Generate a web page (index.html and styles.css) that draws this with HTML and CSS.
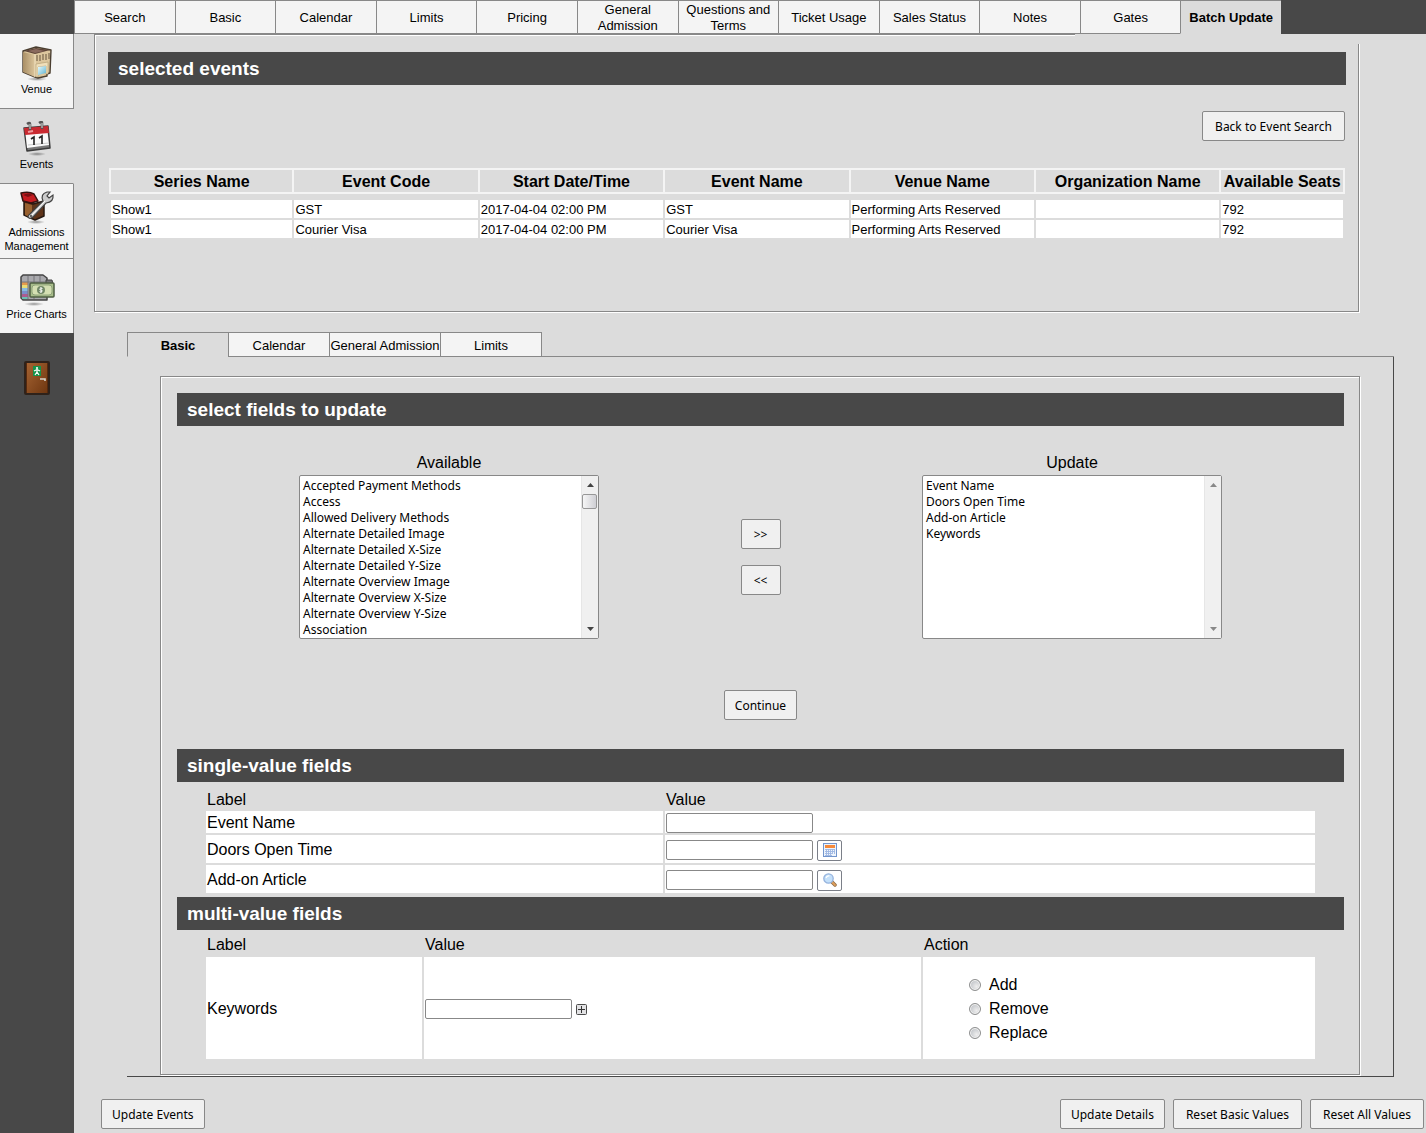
FILE: index.html
```html
<!DOCTYPE html>
<html lang="en">
<head>
<meta charset="utf-8">
<title>Batch Update</title>
<link rel="stylesheet" href="styles.css">
</head>
<body>
<div class="app">
  <nav class="sidebar" aria-label="Modules">
    <a class="module" href="#venue">
      <svg width="34" height="36" viewBox="0 0 34 36">
        <defs>
          <linearGradient id="wall" x1="0" x2="1"><stop offset="0" stop-color="#a98e65"/><stop offset="1" stop-color="#dcc69d"/></linearGradient>
          <linearGradient id="glass" x1="0" x2="1" y2="1"><stop offset="0" stop-color="#e8fbff"/><stop offset="1" stop-color="#5fb3d0"/></linearGradient>
          <radialGradient id="shade"><stop offset="0" stop-color="#000" stop-opacity=".4"/><stop offset="1" stop-color="#000" stop-opacity="0"/></radialGradient>
        </defs>
        <ellipse cx="17" cy="33" rx="10" ry="2" fill="url(#shade)"/>
        <path d="M3 5L16 1L31 4L30 27L27 28V30L18 32L15 31L3 26Z" fill="#dcc69d" stroke="#4a3e30" stroke-width="1.4" stroke-linejoin="round"/>
        <path d="M3 6L15 9V31L3 26Z" fill="url(#wall)"/>
        <path d="M4 5L16 2L30 4L15 8Z" fill="#5d4438"/>
        <path d="M8 5L16 3L25 5L15 7Z" fill="#8a6a5e"/>
        <path d="M17 9V15M20 9V15M23 8V14M26 8V14M29 7V13" stroke="#65533c" stroke-width="1"/>
        <path d="M15 8V31" fill="none" stroke="#f1e2c2" stroke-width="1"/>
        <path d="M16 18L28 16V28L26 28V20L18 21V31H16Z" fill="#f0dfba" stroke="#a28c62" stroke-width=".5"/>
        <path d="M18 21L26 20V27L18 29Z" fill="url(#glass)"/>
      </svg>
      <span>Venue</span>
    </a>
    <a class="module module-active" href="#events">
      <svg width="30" height="36" viewBox="0 0 30 36">
        <ellipse cx="15" cy="33" rx="9" ry="2" fill="url(#shade)"/>
        <path d="M2 7L26 5L28 27L5 30Z" fill="#777" stroke="#3c3c3c" stroke-width="1.5" stroke-linejoin="round"/>
        <path d="M3 8L25 6L27 24L5 27Z" fill="#fafafa"/>
        <path d="M2 7L26 5L27 12L3 14Z" fill="#c92a31"/>
        <path d="M6 11L11 10" stroke="#ee9a9d" stroke-width="2"/>
        <path d="M6 24L27 22" stroke="#ccc"/>
        <path d="M9 18L12 16V24M17 17L20 15V23" fill="none" stroke="#222" stroke-width="1.6"/>
        <path d="M8 9V3Q8 1 5 3M20 8V2Q20 0 17 2" fill="none" stroke="#555" stroke-width="2.600"/>
        <path d="M8 8V3M20 7V2" stroke="#ddd" stroke-width="1"/>
      </svg>
      <span>Events</span>
    </a>
    <a class="module module-two-line" href="#admissions">
      <svg width="36" height="34" viewBox="0 0 36 34">
        <ellipse cx="17" cy="31" rx="9" ry="2" fill="url(#shade)"/>
        <path d="M5 10L14 13L25 10V25L16 29L5 24Z" fill="#5e3319" stroke="#261811" stroke-width="1.5" stroke-linejoin="round"/>
        <path d="M6 12L13 14V27L6 24Z" fill="#97602f"/>
        <path d="M2 2Q10 0 15 3L19 10L12 12L4 10Z" fill="#c51c21" stroke="#351310" stroke-width="1.5" stroke-linejoin="round"/>
        <path d="M4 4Q9 1 14 4L9 6Z" fill="#7d1013"/>
        <path d="M11 23L24 10Q21 3 28 1L31 1L28 5L30 7L34 4Q35 11 27 12L15 25Q11 29 9 26Q9 24 11 23Z" fill="#ccc" stroke="#414141" stroke-width="1.2"/>
        <path d="M13 24L26 10" stroke="#fff"/><circle cx="12" cy="25" r="1" fill="#444"/>
      </svg>
      <span>Admissions Management</span>
    </a>
    <a class="module module-last" href="#prices">
      <svg width="36" height="34" viewBox="0 0 36 34">
        <ellipse cx="15" cy="31" rx="10" ry="2" fill="url(#shade)"/>
        <path d="M4 2H24L28 5V27H4L2 25V4Z" fill="#a9a9ad" stroke="#444" stroke-width="1.5" stroke-linejoin="round"/>
        <path d="M3 9H9V12H3Z" fill="#e59a4c"/><path d="M3 12H9V15H3Z" fill="#e9dc76"/><path d="M3 15H9V18H3Z" fill="#87bbe1"/><path d="M3 18H9V21H3Z" fill="#7b8ecb"/><path d="M3 21H9V24H3Z" fill="#ac5c91"/><path d="M3 24H9V26H3Z" fill="#6bc0b2"/>
        <path d="M9 3V26M15 3V26M21 3V9M3 9H27" stroke="#74747a" fill="none"/>
        <path d="M27 7H33L34 11H27Z" fill="#777" stroke="#444"/>
        <rect x="11" y="10" width="24" height="14" rx="1" fill="#a9bf8b" stroke="#4e5d43" stroke-width="1.5"/>
        <rect x="13" y="12" width="20" height="10" rx="3" fill="#d4dfb2" stroke="#8fa37a"/>
        <circle cx="22" cy="17" r="4" fill="#718867"/>
        <path d="M23.500 15.500Q21 14.500 20.500 16Q21 17 22 17Q24 17.500 23 18.500Q21.500 19.500 20.500 18.500M22 14V20" fill="none" stroke="#fff" stroke-width=".9"/>
      </svg>
      <span>Price Charts</span>
    </a>
    <a class="exit" href="#exit" aria-label="Log out">
      <svg width="26" height="34" viewBox="0 0 26 34">
        <defs><linearGradient id="door" y2="1" x2="1"><stop offset="0" stop-color="#a56332"/><stop offset="1" stop-color="#6f3711"/></linearGradient></defs>
        <rect x="1" y="1" width="24" height="32" rx="1" fill="#55290e" stroke="#2f221a" stroke-width="2"/>
        <rect x="3" y="2" width="20" height="30" fill="url(#door)"/>
        <rect x="9" y="5" width="8" height="10" fill="#15934b"/>
        <circle cx="13" cy="7" r="1.1" fill="#fff"/>
        <path d="M10 10L12 9H14L16 10M13 8V11L15 14M13 11L11 14" fill="none" stroke="#fff" stroke-width="1.2"/>
        <path d="M16 18H21V20" fill="none" stroke="#d7d2ca" stroke-width="1.6"/>
      </svg>
    </a>
  </nav>

  <main class="content">
    <nav class="top-tabs" aria-label="Event sections">
      <a class="tab" href="#search">Search</a>
      <a class="tab" href="#basic">Basic</a>
      <a class="tab" href="#calendar">Calendar</a>
      <a class="tab" href="#limits">Limits</a>
      <a class="tab" href="#pricing">Pricing</a>
      <a class="tab" href="#ga">General Admission</a>
      <a class="tab" href="#terms">Questions and Terms</a>
      <a class="tab" href="#usage">Ticket Usage</a>
      <a class="tab" href="#status">Sales Status</a>
      <a class="tab" href="#notes">Notes</a>
      <a class="tab" href="#gates">Gates</a>
      <a class="tab tab-active" href="#batch">Batch Update</a>
    </nav>

    <section class="panel events-panel">
      <h2 class="bar">selected events</h2>
      <div class="events-actions"><button class="btn btn-roomy" type="button">Back to Event Search</button></div>
      <table class="events">
        <colgroup><col span="6" class="col-wide"><col></colgroup>
        <thead>
          <tr><th>Series Name</th><th>Event Code</th><th>Start Date/Time</th><th>Event Name</th><th>Venue Name</th><th>Organization Name</th><th>Available Seats</th></tr>
        </thead>
        <tbody>
          <tr><td>Show1</td><td>GST</td><td>2017-04-04 02:00 PM</td><td>GST</td><td>Performing Arts Reserved</td><td></td><td>792</td></tr>
          <tr><td>Show1</td><td>Courier Visa</td><td>2017-04-04 02:00 PM</td><td>Courier Visa</td><td>Performing Arts Reserved</td><td></td><td>792</td></tr>
        </tbody>
      </table>
    </section>

    <form class="batch">
      <nav class="sub-tabs" aria-label="Field groups">
        <a class="tab tab-active" href="#f-basic">Basic</a>
        <a class="tab" href="#f-calendar">Calendar</a>
        <a class="tab tab-wide" href="#f-ga">General Admission</a>
        <a class="tab" href="#f-limits">Limits</a>
      </nav>
      <div class="sub-page">
        <section class="panel fields-panel">
          <h2 class="bar">select fields to update</h2>
          <div class="picker">
            <div class="picker-list">
              <label for="available">Available</label>
              <div class="listbox-frame">
                <select id="available" class="listbox" multiple size="10">
                  <option>Accepted Payment Methods</option>
                  <option>Access</option>
                  <option>Allowed Delivery Methods</option>
                  <option>Alternate Detailed Image</option>
                  <option>Alternate Detailed X-Size</option>
                  <option>Alternate Detailed Y-Size</option>
                  <option>Alternate Overview Image</option>
                  <option>Alternate Overview X-Size</option>
                  <option>Alternate Overview Y-Size</option>
                  <option>Association</option>
                </select>
                <div class="scroll" aria-hidden="true">
                  <svg class="arrow" width="7" height="4" viewBox="0 0 7 4"><path d="M0 4L3.500 0L7 4Z"/></svg>
                  <span class="thumb"></span>
                  <svg class="arrow arrow-down" width="7" height="4" viewBox="0 0 7 4"><path d="M0 0L3.500 4L7 0Z"/></svg>
                </div>
              </div>
            </div>
            <div class="picker-moves">
              <button class="btn btn-move" type="button" aria-label="Add field">&gt;&gt;</button>
              <button class="btn btn-move" type="button" aria-label="Remove field">&lt;&lt;</button>
            </div>
            <div class="picker-list">
              <label for="update">Update</label>
              <div class="listbox-frame">
                <select id="update" class="listbox" multiple size="10">
                  <option>Event Name</option>
                  <option>Doors Open Time</option>
                  <option>Add-on Article</option>
                  <option>Keywords</option>
                </select>
                <div class="scroll scroll-idle" aria-hidden="true">
                  <svg class="arrow" width="7" height="4" viewBox="0 0 7 4"><path d="M0 4L3.500 0L7 4Z"/></svg>
                  <svg class="arrow arrow-down" width="7" height="4" viewBox="0 0 7 4"><path d="M0 0L3.500 4L7 0Z"/></svg>
                </div>
              </div>
            </div>
          </div>
          <div class="continue"><button class="btn" type="button">Continue</button></div>

          <h2 class="bar">single-value fields</h2>
          <table class="fields single">
            <colgroup><col class="col-label"><col></colgroup>
            <thead><tr><th>Label</th><th>Value</th></tr></thead>
            <tbody>
              <tr class="row-short"><td><label for="event-name">Event Name</label></td><td><div class="value"><input class="text" id="event-name" type="text"></div></td></tr>
              <tr><td><label for="doors">Doors Open Time</label></td><td><div class="value"><input class="text" id="doors" type="text"><button class="icon-btn" type="button" aria-label="Pick a date">
                <svg width="14" height="14" viewBox="0 0 14 14"><rect x=".5" y=".5" width="13" height="13" fill="#eef4fc" stroke="#7295cd"/><path d="M2 2H12V5H2Z" fill="#f58a3c"/><path d="M2 6.5H12M2 8.5H12M2 10.500H9M2 12.500H9M3.500 6V13M5.500 6V13M7.500 6V13M9.500 6V11M11.500 6V11" stroke="#9db7e2" stroke-width=".9"/></svg>
              </button></div></td></tr>
              <tr><td><label for="addon">Add-on Article</label></td><td><div class="value"><input class="text" id="addon" type="text"><button class="icon-btn" type="button" aria-label="Look up an article">
                <svg width="14" height="14" viewBox="0 0 14 14"><path d="M8 8L12 12" stroke="#8e6b45" stroke-width="3.500" stroke-linecap="round"/><path d="M9.500 9.500L12 12" stroke="#e0a05c" stroke-width="1.800" stroke-linecap="round"/><circle cx="5.500" cy="5.500" r="4.700" fill="#c4e0fa" stroke="#95b3de" stroke-width="1.300"/><path d="M3 5Q4 2.500 6.500 3" fill="none" stroke="#fff" stroke-width="1.200"/></svg>
              </button></div></td></tr>
            </tbody>
          </table>

          <h2 class="bar">multi-value fields</h2>
          <table class="fields multi">
            <colgroup><col class="col-key"><col class="col-value"><col></colgroup>
            <thead><tr><th>Label</th><th>Value</th><th>Action</th></tr></thead>
            <tbody>
              <tr>
                <td><label for="keywords">Keywords</label></td>
                <td><div class="value"><input class="text" id="keywords" type="text"><button class="plus" type="button" aria-label="Add a value">
                  <svg width="11" height="11" viewBox="0 0 11 11"><rect x=".5" y=".5" width="10" height="10" rx="1" fill="#e2e2e4" stroke="#4b4b4b"/><path d="M2 5.500H9M5.500 2V9" stroke="#333"/></svg>
                </button></div></td>
                <td><div class="actions">
                  <label><input type="radio" name="action">Add</label>
                  <label><input type="radio" name="action">Remove</label>
                  <label><input type="radio" name="action">Replace</label>
                </div></td>
              </tr>
            </tbody>
          </table>
        </section>
      </div>
    </form>

    <footer class="footer">
      <button class="btn" type="button">Update Events</button>
      <div class="footer-right">
        <button class="btn" type="button">Update Details</button>
        <button class="btn btn-roomy" type="button">Reset Basic Values</button>
        <button class="btn btn-roomy" type="button">Reset All Values</button>
      </div>
    </footer>
  </main>
</div>
</body>
</html>
```
FILE: styles.css
```css
:root {
  --page: #dcdcdc;
  --dark: #484848;
  --light: #f4f4f4;
  --line: #888;
  --control: "Noto Sans", Tahoma, sans-serif;
}
* { box-sizing: border-box; }
body {
  margin: 0;
  background: var(--page);
  color: #000;
  font: 16px/18px "Liberation Sans", Arial, sans-serif;
}
a { color: inherit; text-decoration: none; }
svg { display: block; }
.app { display: flex; min-height: 100vh; }

/* Module sidebar */
.sidebar { flex: 0 0 74px; background: var(--dark); padding-top: 34px; }
.module {
  display: flex;
  flex-direction: column;
  align-items: center;
  height: 75px;
  padding: 12px 0 0;
  background: var(--light);
  border-right: 1px solid var(--line);
  border-bottom: 1px solid var(--line);
  font-size: 11px;
  line-height: 14px;
  text-align: center;
}
.module-active { background: var(--page); border-right-color: var(--page); }
.module-two-line { padding-top: 7px; }
.module-last { height: 74px; padding-top: 14px; border-bottom: 0; }
.exit { display: flex; justify-content: center; margin-top: 28px; }

/* Tabs */
.content { flex: 1; min-width: 0; }
.top-tabs {
  display: grid;
  grid-template-columns: repeat(12, 1fr);
  grid-template-rows: 34px;
  padding-right: 145px;
  background: var(--dark);
}
.tab {
  display: flex;
  align-items: center;
  justify-content: center;
  padding-top: 2px;
  background: var(--light);
  border: 1px solid var(--line);
  border-right: 0;
  font-size: 13px;
  line-height: 16px;
  text-align: center;
}
.tab-active { background: var(--page); border-bottom-color: var(--page); font-weight: bold; }

/* Panels have an etched edge: a grey line with a white one beside it */
.panel {
  border: 1px solid var(--line);
  box-shadow: inset 1px 1px 0 #fff, 1px 1px 0 #fff;
}
.bar {
  margin: 0;
  padding: 0 10px;
  background: var(--dark);
  color: #fff;
  font-size: 19px;
  line-height: 33px;
}
.events-panel {
  position: relative;
  margin: 0 67px 0 20px;
  padding: 17px 12px 71px 13px;
}
.events-panel::after {
  content: "";
  position: absolute;
  top: -1px;
  right: -2px;
  width: 285px;
  height: 10px;
  background: var(--page);
}
.events-actions { display: flex; justify-content: flex-end; padding: 26px 1px 27px; }

.btn {
  height: 30px;
  padding: 2px 10px 0;
  background: #f0f0f0;
  border: 1px solid var(--line);
  border-radius: 2px;
  color: #000;
  font: 12px/16px var(--control);
}
.btn-roomy { padding: 2px 12px 0; }

/* Selected events */
.events {
  width: calc(100% - 2px);
  margin: 0 1px;
  table-layout: fixed;
  border-spacing: 0;
}
.col-wide { width: 15%; }
.events th {
  padding: 3px 0 1px;
  border: solid var(--light);
  border-width: 2px 2px 2px 0;
  white-space: nowrap;
}
.events td {
  height: 20px;
  padding: 2px 1px 0;
  background: #fff;
  border: solid var(--page);
  border-width: 0 2px 2px 0;
  font-size: 13px;
  line-height: 16px;
}
.events th:first-child, .events td:first-child { border-left-width: 2px; }
.events tbody tr:first-child td { border-top-width: 6px; }

/* Batch form */
.batch { margin: 20px 32px 0 53px; }
.sub-tabs { display: flex; height: 25px; }
.sub-tabs .tab { flex: 0 0 101px; }
.sub-tabs .tab-wide { flex-basis: 111px; white-space: nowrap; }
.sub-tabs::after {
  content: "";
  flex: 1;
  border-left: 1px solid var(--line);
  border-bottom: 1px solid var(--line);
}
.sub-page {
  padding: 19px 33px 1px;
  border: solid var(--dark);
  border-width: 0 1px 1px 0;
}
.fields-panel { padding: 16px 15px 15px 16px; }

.picker { display: flex; justify-content: space-between; align-items: flex-end; padding: 28px 122px 0; }
.picker-list { display: flex; flex-direction: column; align-items: center; gap: 3px; }
.picker-moves { display: flex; flex-direction: column; justify-content: center; gap: 16px; height: 164px; }
.btn-move { width: 40px; padding: 2px 0 0; }
.continue { display: flex; justify-content: center; padding: 51px 0 29px; }

.listbox-frame { position: relative; }
.listbox {
  display: block;
  width: 300px;
  height: 164px;
  padding: 1px 0;
  background: #fff;
  border: 1px solid var(--line);
  border-radius: 2px;
  color: #000;
  font: 12px/16px var(--control);
  scrollbar-width: none;
}
.listbox option { min-height: 16px; height: 16px; padding: 0 3px; line-height: 16px; }
.scroll {
  position: absolute;
  top: 1px;
  right: 1px;
  bottom: 1px;
  width: 17px;
  display: flex;
  flex-direction: column;
  align-items: center;
  gap: 7px;
  padding: 7px 0;
  background: #f0f0f0;
  border-left: 1px solid #e6e6e6;
  pointer-events: none;
}
.arrow { fill: #444; }
.arrow-down { margin-top: auto; }
.scroll-idle .arrow { fill: #888; }
.thumb {
  align-self: flex-start;
  width: 15px;
  height: 15px;
  background: linear-gradient(90deg, #f6f6f6, #cfcfd4);
  border: 1px solid #979797;
  border-radius: 2px;
}

/* Field tables */
.fields {
  width: calc(100% - 58px);
  margin: 0 29px;
  table-layout: fixed;
  border-spacing: 0;
}
.fields th { padding: 6px 1px 3px; font-weight: normal; text-align: left; }
.fields td {
  height: 30px;
  padding: 2px 1px 0;
  background: #fff;
  border: solid var(--page);
  border-width: 0 2px 2px 0;
}
.fields td:last-child { border-right: 0; }
.single { margin-bottom: 2px; }
.single th { padding: 9px 1px 2px; }
.single .row-short td { height: 24px; }
.col-label { width: 459px; }
.multi td { height: 102px; border-bottom: 0; }
.col-key { width: 218px; }
.col-value { width: 499px; }
.value { display: flex; align-items: center; gap: 4px; }
.text {
  width: 147px;
  height: 20px;
  padding: 0 2px;
  background: #fff;
  border: 1px solid var(--line);
  border-radius: 2px;
  font: 12px/16px var(--control);
}
.icon-btn {
  display: grid;
  place-items: center;
  width: 25px;
  height: 21px;
  padding: 0;
  background: #fff;
  border: 1px solid #7b7f88;
  border-radius: 2px;
}
.plus { padding: 0; background: none; border: 0; }
.actions { display: flex; flex-direction: column; padding-left: 45px; }
.actions label { display: flex; align-items: center; gap: 8px; line-height: 24px; }
.actions input {
  appearance: none;
  width: 12px;
  height: 12px;
  margin: 0;
  border: 1px solid #8e8f8f;
  border-radius: 50%;
  background: radial-gradient(circle at 65% 65%, #eee, #c4c7cb 70%);
  box-shadow: inset 0 0 0 1px #f4f4f4;
}

.footer { display: flex; justify-content: space-between; padding: 22px 2px 4px 27px; }
.footer-right { display: flex; gap: 8px; }
```
